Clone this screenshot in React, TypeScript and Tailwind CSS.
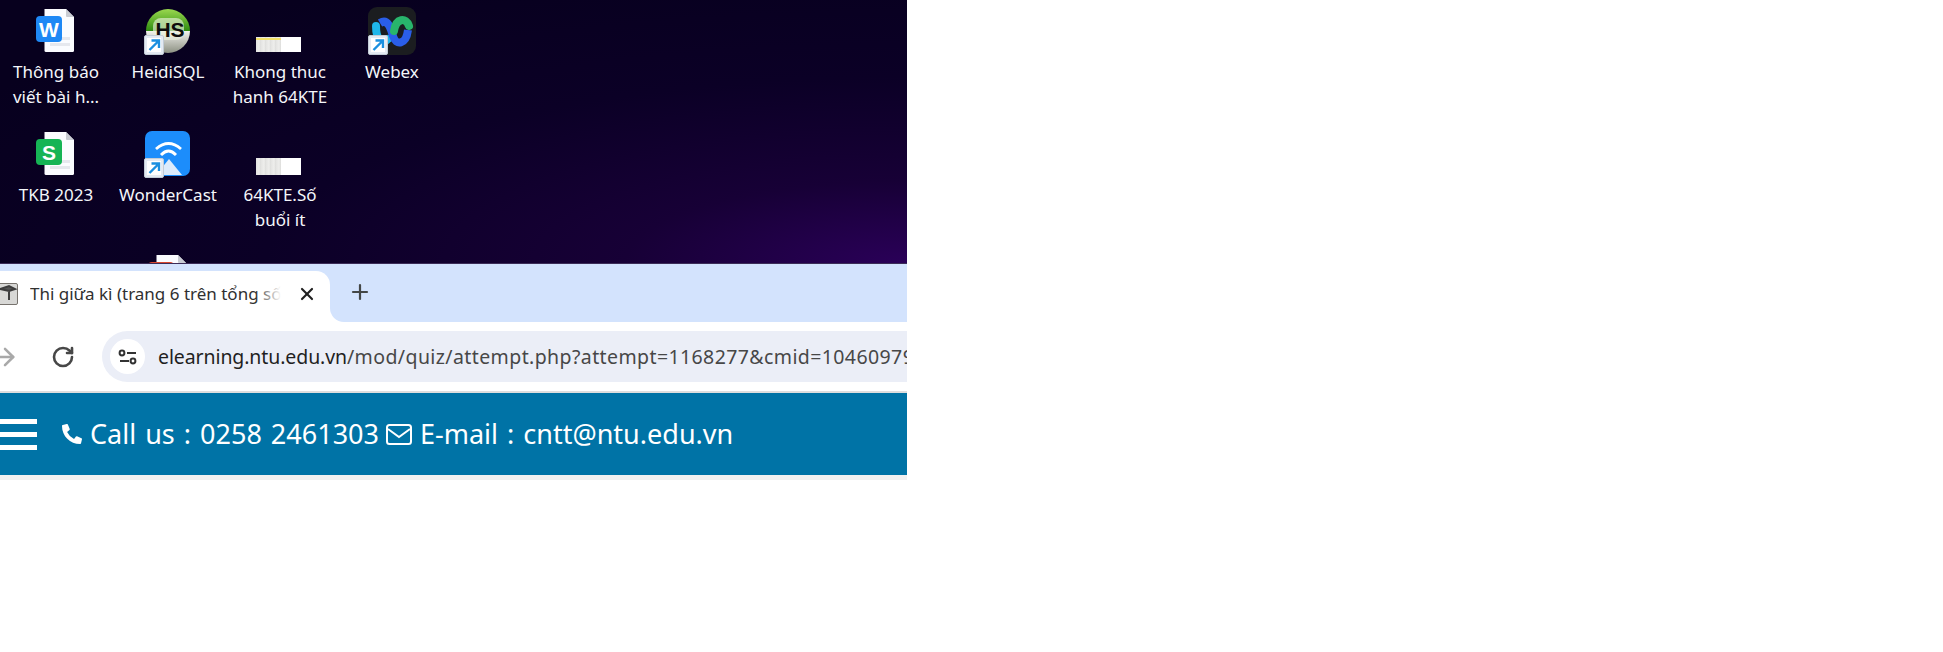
import { ArrowRight, Plus, RotateCw, X } from "lucide-react";
import { FaPhoneAlt } from "react-icons/fa";

const font = { fontFamily: '"Noto Sans", "Open Sans", sans-serif' };

function Shortcut() {
  return (
    <g>
      <rect x="0.5" y="28.5" width="19" height="19" rx="1.5" fill="#e4eaf2" stroke="#c3ccd6" />
      <rect x="3" y="31" width="14" height="14" fill="#fff" />
      <path d="M5.5 43 L14 34.5 M7.5 33.5 H15 V41" fill="none" stroke="#1a8fe0" strokeWidth="2.4" />
    </g>
  );
}

function DocIcon({ color, letter }: { color: string; letter: string }) {
  return (
    <svg width="48" height="48" viewBox="0 0 48 48">
      <path d="M12.5 2 H34 L42 10 V43.5 Q42 45 40.5 45 H14 Q12.5 45 12.5 43.5 Z" fill="#fbfcff" />
      <path d="M34 2 L42 10 H35 Q34 10 34 9 Z" fill="#c9ccd3" />
      <rect x="27" y="30" width="11" height="3" fill="#e6e8ee" />
      <rect x="18" y="36" width="20" height="3" fill="#e6e8ee" />
      <rect x="4" y="9" width="26" height="26" rx="4" fill={color} />
      <text x="17" y="30" textAnchor="middle" fontSize="21" fontWeight="700" fill="#fff" fontFamily="Liberation Sans">
        {letter}
      </text>
    </svg>
  );
}

function HeidiIcon() {
  return (
    <svg width="48" height="48" viewBox="0 0 48 48">
      <defs>
        <linearGradient id="hs" x1="0" y1="0" x2="0" y2="1">
          <stop offset="0" stopColor="#9ad84f" />
          <stop offset="0.5" stopColor="#2e8c10" />
          <stop offset="0.5" stopColor="#f2f2ee" />
          <stop offset="1" stopColor="#8c9082" />
        </linearGradient>
      </defs>
      <circle cx="24" cy="24" r="22" fill="url(#hs)" />
      <rect x="9" y="11" width="31" height="22" rx="8" fill="#e9f1dc" opacity="0.65" />
      <text x="26" y="30" textAnchor="middle" fontSize="21" fontWeight="700" fill="#0d0d0d" fontFamily="Liberation Sans">
        HS
      </text>
      <Shortcut />
    </svg>
  );
}

function WonderCastIcon() {
  return (
    <svg width="48" height="48" viewBox="0 0 48 48">
      <rect x="1" y="1" width="45" height="45" rx="7" fill="#1c8dfb" />
      <path d="M12 19 Q24.5 8 37 19" fill="none" stroke="#fff" strokeWidth="2.8" />
      <path d="M17 25 Q24.5 17 32 25" fill="none" stroke="#fff" strokeWidth="2.8" />
      <path d="M12 45 L25 29 L38 45 Z" fill="#dcebfb" />
      <Shortcut />
    </svg>
  );
}

function WebexIcon() {
  return (
    <svg width="48" height="48" viewBox="0 0 48 48">
      <rect width="48" height="48" rx="9" fill="#1b1d20" />
      <path d="M8 19 C8 34 15 38 20 32" fill="none" stroke="#1fb6ea" strokeWidth="8" strokeLinecap="round" />
      <path d="M12 16 C20 11 23 22 25 29 C28 39 38 38 40 23" fill="none" stroke="#2a5ee8" strokeWidth="8" />
      <path d="M26 24 C28 11 38 10 41 19" fill="none" stroke="#28b56c" strokeWidth="8" strokeLinecap="round" />
      <Shortcut />
    </svg>
  );
}

function Thumb({ h, stripe }: { h: string; stripe?: boolean }) {
  return (
    <div className="flex h-12 w-12 items-end">
      <div className={`relative mb-[3px] flex w-[45px] bg-white ${h}`}>
        <div className="w-[25px] bg-[repeating-linear-gradient(90deg,#e4e4e2_0px,#eeeeec_3px,#dcdcda_5px)]" />
        {stripe && <div className="absolute left-0 top-[1px] h-[2px] w-[25px] bg-[#f3e26a]" />}
      </div>
    </div>
  );
}

const desktop = [
  { label: "Thông báo viết bài h...", icon: <DocIcon color="#1e88f5" letter="W" /> },
  { label: "HeidiSQL", icon: <HeidiIcon /> },
  { label: "Khong thuc hanh 64KTE", icon: <Thumb h="h-[15px]" stripe /> },
  { label: "Webex", icon: <WebexIcon /> },
  { label: "TKB 2023", icon: <DocIcon color="#16b455" letter="S" /> },
  { label: "WonderCast", icon: <WonderCastIcon /> },
  { label: "64KTE.Số buổi ít", icon: <Thumb h="h-[17px]" /> },
  null,
  null,
  { label: "", icon: <DocIcon color="#d9472f" letter="" /> },
];

export default function App() {
  return (
    <div className="h-[652px] w-[1943px] overflow-hidden bg-white" style={font}>
      <div className="w-[907px]">
        {/* Desktop */}
        <div className="h-[263px] overflow-hidden bg-[radial-gradient(ellipse_at_100%_100%,#2a0058_0%,#170036_22%,#0b0026_50%,#07001e_85%)]">
          <div className="grid grid-cols-[repeat(4,112px)] auto-rows-[123px] pt-[7px]">
            {desktop.map((d, i) =>
              d ? (
                <div key={i} className="flex flex-col items-center">
                  {d.icon}
                  <span className="mt-[4px] w-[100px] text-center text-[17px] leading-[25px] text-[#f4f6fa]">{d.label}</span>
                </div>
              ) : (
                <div key={i} />
              )
            )}
          </div>
        </div>
        <div className="h-[1px] bg-[#3b2c57]" />

        {/* Tab strip */}
        <div className="flex h-[58px] bg-white">
          <div className="flex w-[330px] items-end bg-[#d3e3fd]">
            <div className="relative flex h-[51px] w-full items-center rounded-tr-[14px] bg-white pb-[5px]">
              <svg className="shrink-0" width="18" height="22" viewBox="0 0 18 22">
                <rect x="-4" y="0.5" width="21.5" height="21" rx="1.5" fill="#d8d8d6" stroke="#77736e" />
                <path d="M0 6 L9 3 L15 6 L9 8 Z M9 8 V17" fill="#555" stroke="#3d3d3d" strokeWidth="2" />
              </svg>
              <div className="relative ml-[12px] w-[251px] overflow-hidden whitespace-nowrap text-[17px] text-[#303030]">
                Thi giữa kì (trang 6 trên tổng số
                <div className="absolute inset-y-0 right-0 w-[26px] bg-gradient-to-r from-white/0 to-white" />
              </div>
              <X className="ml-[16px] shrink-0 text-[#1f1f1f]" size={20} strokeWidth={2.6} />
            </div>
          </div>
          <div className="flex flex-1 items-end rounded-bl-[14px] bg-[#d3e3fd]">
            <Plus className="mb-[18px] ml-[18px] text-[#444746]" size={24} strokeWidth={2.2} />
          </div>
        </div>

        {/* Toolbar */}
        <div className="flex h-[69px] items-center bg-white">
          <ArrowRight className="-ml-[9px] shrink-0 text-[#a9a9a9]" size={28} strokeWidth={2.2} />
          <RotateCw className="ml-[32px] shrink-0 text-[#474747]" size={24} strokeWidth={2.6} />
          <div className="ml-[27px] flex h-[51px] min-w-0 flex-1 items-center overflow-hidden rounded-l-full bg-[#ebeef7]">
            <div className="ml-[8px] flex h-[35px] w-[35px] shrink-0 items-center justify-center rounded-full bg-white">
              <svg width="20" height="16" viewBox="0 0 20 16" fill="none" stroke="#333" strokeWidth="2">
                <circle cx="4" cy="4" r="2.4" />
                <path d="M9 4 H18 M2 12 H11" />
                <circle cx="15" cy="12" r="2.4" />
              </svg>
            </div>
            <div className="ml-[13px] whitespace-nowrap text-[19.5px] tracking-[0.4px] text-[#474747]">
              <span className="tracking-[-0.1px] text-[#1f1f1f]">elearning.ntu.edu.vn</span>/mod/quiz/attempt.php?attempt=1168277&amp;cmid=10460979
            </div>
          </div>
        </div>

        {/* Site header */}
        <div className="h-[2px] bg-[#dedede]" />
        <div className="flex h-[82px] items-center bg-[#0073a6] text-white">
          <div className="flex w-[37px] shrink-0 flex-col gap-[8px]">
            <div className="h-[5px] bg-white" />
            <div className="h-[5px] bg-white" />
            <div className="h-[5px] bg-white" />
          </div>
          <div className="ml-[25px] flex items-center whitespace-nowrap text-[27px] [word-spacing:2px]">
            <FaPhoneAlt size={20} />
            <span className="ml-[8px]">Call us : 0258 2461303</span>
            <svg className="ml-[7px]" width="26" height="22" viewBox="0 0 26 22" fill="none" stroke="#fff" strokeWidth="2">
              <rect x="1" y="2" width="24" height="19" rx="2.5" />
              <path d="M2 6 L13 14 L24 6" />
            </svg>
            <span className="ml-[8px]">E-mail : cntt@ntu.edu.vn</span>
          </div>
        </div>
        <div className="h-[5px] bg-[#f1f1f1]" />
      </div>
    </div>
  );
}
